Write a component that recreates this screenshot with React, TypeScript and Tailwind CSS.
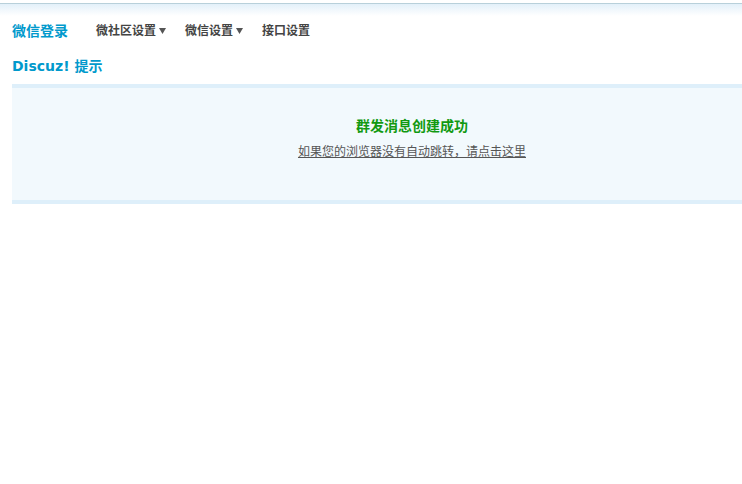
const Caret = () => (
  <svg width="7" height="6" viewBox="0 0 7 6" className="ml-[3px] mt-[1px]">
    <polygon points="0,0 7,0 3.5,6" fill="#555555" />
  </svg>
);

const navItems = [
  { label: "微社区设置", menu: true },
  { label: "微信设置", menu: true },
  { label: "接口设置", menu: false },
];

export default function App() {
  return (
    <div
      className="relative h-[484px] w-[742px] overflow-hidden bg-white"
      style={{ fontFamily: '"Noto Sans CJK SC", "Noto Sans", sans-serif' }}
    >
      {/* top strip */}
      <div className="h-[3px]" />
      <div className="h-[13px] border-t border-[#b8d0da] bg-gradient-to-b from-[#e3f0f9] to-white" />

      {/* nav */}
      <div className="flex h-[28px] items-center pl-[12px]">
        <span className="text-[14px] leading-[20px] font-bold text-[#0099cc]">微信登录</span>
        <div className="ml-[28px] flex items-center gap-[19px]">
          {navItems.map((item) => (
            <span key={item.label} className="flex items-center text-[12px] leading-[18px] font-bold text-[#444444]">
              {item.label}
              {item.menu && <Caret />}
            </span>
          ))}
        </div>
      </div>

      <h3
        className="mt-[12px] mb-[8px] pl-[12px] text-[14px] leading-[20px] font-bold text-[#0099cc]"
        style={{ fontFamily: '"DejaVu Sans", "Noto Sans CJK SC", sans-serif' }}
      >
        Discuz! 提示
      </h3>

      <div className="ml-[12px] w-[800px] border-y-4 border-[#deeffa] bg-[#f2f9fd]">
        <div className="flex h-[112px] flex-col items-center pt-[27px] text-center">
          <h4 className="text-[14px] leading-[20px] font-bold text-[#119911]">群发消息创建成功</h4>
          <a href="#" className="mt-[7px] text-[12px] leading-[18px] text-[#555555] underline">
            如果您的浏览器没有自动跳转，请点击这里
          </a>
        </div>
      </div>
    </div>
  );
}
